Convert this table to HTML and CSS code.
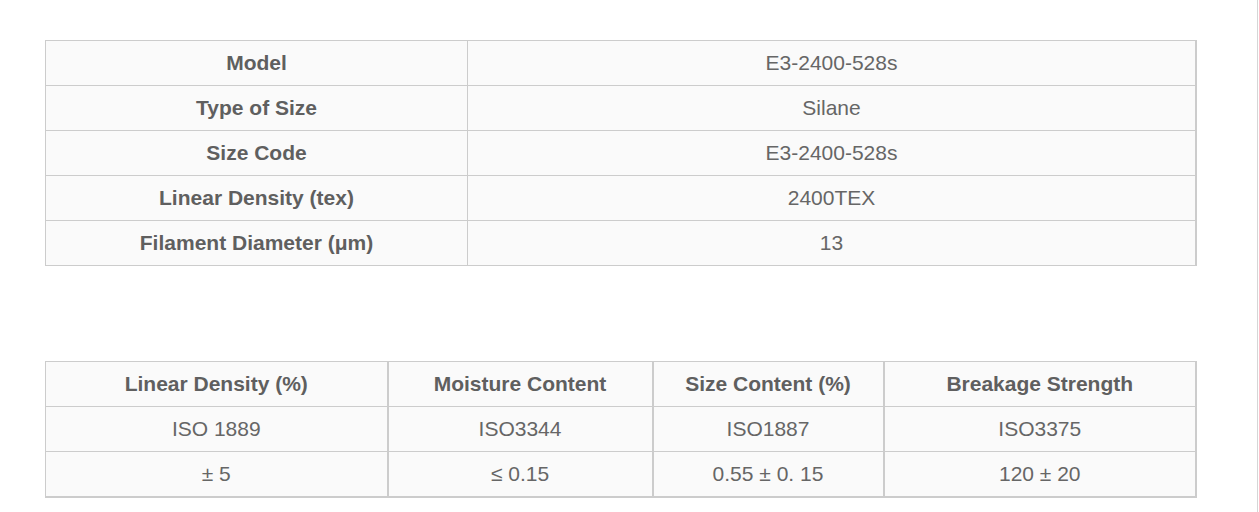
FILE: index.html
```html
<!DOCTYPE html>
<html lang="en">
<head>
  <meta charset="UTF-8" />
  <meta name="viewport" content="width=device-width, initial-scale=1" />
  <title>E3-2400-528s</title>
  <link rel="stylesheet" href="styles.css">
</head>
<body>
  <div class="page">
    <table class="spec spec-info">
      <colgroup>
        <col class="col-label" />
        <col />
      </colgroup>
      <tr><th>Model</th><td>E3-2400-528s</td></tr>
      <tr><th>Type of Size</th><td>Silane</td></tr>
      <tr><th>Size Code</th><td>E3-2400-528s</td></tr>
      <tr><th>Linear Density (tex)</th><td>2400TEX</td></tr>
      <tr><th>Filament Diameter (μm)</th><td>13</td></tr>
    </table>

    <table class="spec spec-test">
      <colgroup>
        <col class="c1" />
        <col class="c2" />
        <col class="c3" />
        <col class="c4" />
      </colgroup>
      <tr>
        <th>Linear Density (%)</th>
        <th>Moisture Content</th>
        <th>Size Content (%)</th>
        <th>Breakage Strength</th>
      </tr>
      <tr><td>ISO 1889</td><td>ISO3344</td><td>ISO1887</td><td>ISO3375</td></tr>
      <tr><td>± 5</td><td>≤ 0.15</td><td>0.55 ± 0. 15</td><td>120 ± 20</td></tr>
    </table>
  </div>
</body>
</html>
```

FILE: styles.css
```css
html, body { margin: 0; padding: 0; background: #fff; }
body {
  font-family: "Liberation Sans", Arial, sans-serif;
  color: #666;
}
.page {
  width: 1258px;
  height: 512px;
  border-right: 1px solid #d6d6d6;
  padding: 40px 0 0 45px;
  box-sizing: border-box;
}
.spec {
  width: 1152px;
  border-collapse: collapse;
  table-layout: fixed;
  background: #fafafa;
  border-right: 2px solid #ccc;
}
.spec th, .spec td {
  border: 1px solid #ccc;
  height: 44px;
  padding: 0;
  text-align: center;
  font-size: 21px;
  line-height: 24px;
}
.spec th { font-weight: bold; color: #5f5f5f; }
.spec td { color: #666; }
.col-label { width: 422px; }
.spec-test { margin-top: 95px; border-bottom: 2px solid #ccc; }
.spec-test th + th, .spec-test td + td { border-left-width: 2px; }
.spec-test .c1 { width: 342px; }
.spec-test .c2 { width: 265px; }
.spec-test .c3 { width: 231px; }
```
